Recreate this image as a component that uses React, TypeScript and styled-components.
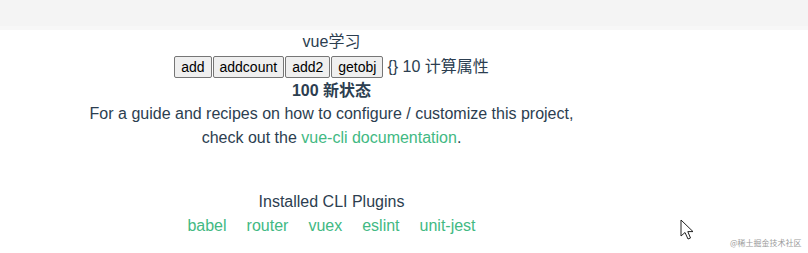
import React from "react";
import styled, { createGlobalStyle } from "styled-components";

const Global = createGlobalStyle`
  html, body { margin: 0; padding: 0; background: #ffffff; }
  body { width: 808px; height: 253px; overflow: hidden; }
`;

const Page = styled.div`
  position: relative;
  width: 808px;
  height: 253px;
  background: #ffffff;
  font-family: "Liberation Sans", Arial, "Noto Sans CJK SC", sans-serif;
  color: #2c3e50;
  font-size: 16px;
`;

const TopBar = styled.div`
  height: 30px;
  background: linear-gradient(#f4f4f4 0, #f4f4f4 26px, #f7f7f7 26px, #f7f7f7 30px);
`;

const Main = styled.div`
  width: 663px;
  display: flex;
  flex-direction: column;
  align-items: center;
  text-align: center;
`;

const Line = styled.div<{ $h: number; $bold?: boolean }>`
  height: ${(p) => p.$h}px;
  line-height: ${(p) => p.$h}px;
  font-weight: ${(p) => (p.$bold ? 700 : 400)};
  white-space: nowrap;
`;

const ButtonRow = styled.div`
  height: 26px;
  display: flex;
  align-items: center;
  white-space: nowrap;
`;

const Btn = styled.button`
  font-family: "Liberation Sans", Arial, sans-serif;
  font-size: 14px;
  height: 22px;
  padding: 1px 6px;
  margin: 0;
  border: 1px solid #767676;
  border-radius: 2px;
  background: #efefef;
  color: #000;
  box-sizing: border-box;
  & + & { margin-left: 1px; }
`;

const Trail = styled.span`
  margin-left: 4px;
  line-height: 24px;
`;

const Para = styled.p`
  margin: 0;
  line-height: 24px;
`;

const Link = styled.a`
  color: #42b983;
  text-decoration: none;
`;

const PluginTitle = styled.h3`
  margin: 40px 0 0;
  font-size: 16px;
  font-weight: 400;
  line-height: 24px;
`;

const PluginList = styled.ul`
  list-style: none;
  margin: 0;
  padding: 0;
  display: flex;
  line-height: 24px;
`;

const PluginItem = styled.li`
  margin: 0 10px;
`;

const Cursor = styled.svg`
  position: absolute;
  left: 680px;
  top: 219px;
`;

const Watermark = styled.div`
  position: absolute;
  left: 730px;
  top: 238px;
  font-family: "Noto Sans CJK SC", sans-serif;
  font-size: 8px;
  line-height: 10px;
  color: #9a9a9a;
  white-space: nowrap;
`;

export default function App() {
  const plugins = ["babel", "router", "vuex", "eslint", "unit-jest"];
  return (
    <Page>
      <Global />
      <TopBar />
      <Main>
        <Line $h={24}>vue学习</Line>
        <ButtonRow>
          <Btn>add</Btn>
          <Btn>addcount</Btn>
          <Btn>add2</Btn>
          <Btn>getobj</Btn>
          <Trail>{"{} 10 计算属性"}</Trail>
        </ButtonRow>
        <Line $h={22} $bold>100 新状态</Line>
        <Para>
          For a guide and recipes on how to configure / customize this project,
          <br />
          check out the <Link href="#">vue-cli documentation</Link>.
        </Para>
        <PluginTitle>Installed CLI Plugins</PluginTitle>
        <PluginList>
          {plugins.map((p) => (
            <PluginItem key={p}>
              <Link href="#">{p}</Link>
            </PluginItem>
          ))}
        </PluginList>
      </Main>
      <Cursor width="16" height="22" viewBox="0 0 16 22">
        <path
          d="M1 1 L1 17 L5 13.5 L8 20 L10.5 19 L7.8 12.6 L13 12.6 Z"
          fill="#ffffff"
          stroke="#222"
          strokeWidth="1"
          strokeLinejoin="miter"
        />
      </Cursor>
      <Watermark>@稀土掘金技术社区</Watermark>
    </Page>
  );
}
